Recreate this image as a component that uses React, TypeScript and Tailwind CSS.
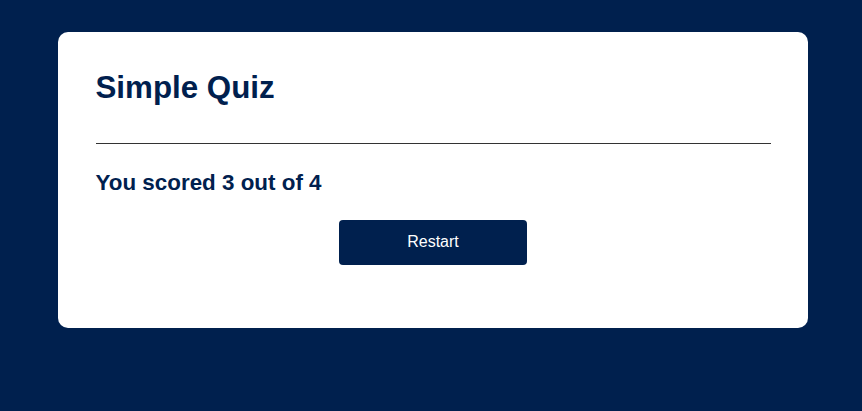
import React, { useState } from 'react';

const App: React.FC = () => {
  const [score, setScore] = useState(3);
  const total = 4;

  return (
    <div className="min-h-[411px] w-full bg-[#00204e] pt-[32px] font-['Liberation_Sans',Arial,sans-serif]">
      <div className="ml-[58px] w-[750px] rounded-[10px] bg-white p-[37.5px]">
        <h1 className="text-[31.3px] font-bold leading-[36px] text-[#00204e]">Simple Quiz</h1>
        <hr className="mt-[37px] border-t border-[#333333]" />
        <h2 className="mt-[26px] text-[22.4px] font-bold leading-[25px] text-[#00204e]">
          You scored {score} out of {total}
        </h2>
        <div className="mt-[25px] mb-[26px] flex justify-center">
          <button
            type="button"
            onClick={() => setScore(0)}
            className="h-[45px] w-[188px] rounded-[4px] bg-[#00204e] text-[16px] text-white"
          >
            Restart
          </button>
        </div>
      </div>
    </div>
  );
};

export default App;
